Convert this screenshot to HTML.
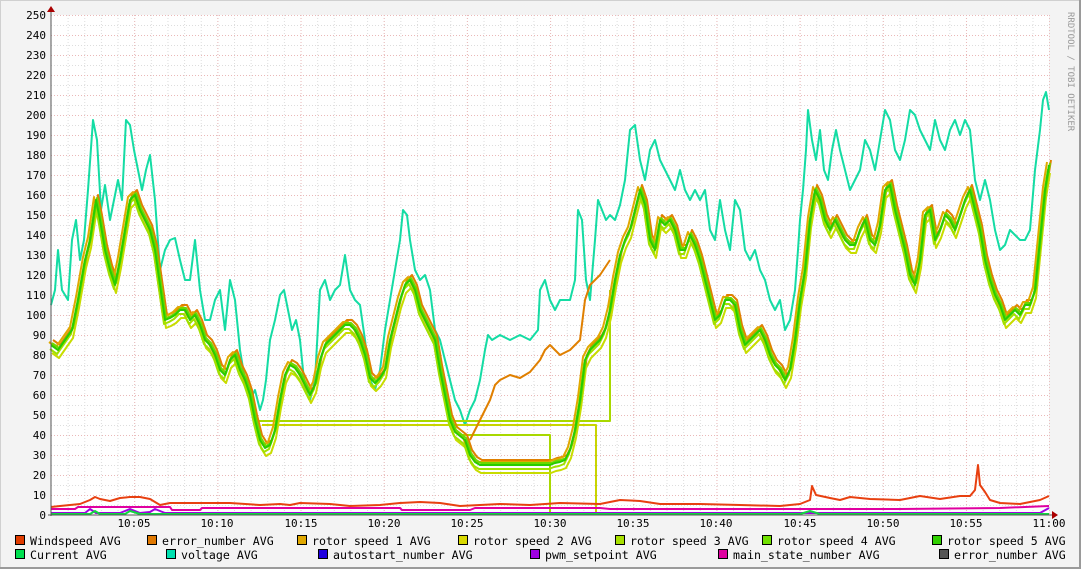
<!DOCTYPE html>
<html><head><meta charset="utf-8"><style>
html,body{margin:0;padding:0;background:#f3f3f3}
svg{display:block}
text{font-family:"DejaVu Sans Mono","Liberation Mono",monospace;font-size:11px;fill:#000}
.lg text{font-size:11.6px}
</style></head><body>
<svg width="1081" height="569" xmlns="http://www.w3.org/2000/svg">
<defs>
<pattern id="vg" x="51" y="0" width="16.636" height="569" patternUnits="userSpaceOnUse"><line x1="0.5" y1="0" x2="0.5" y2="569" stroke="#ddd" stroke-dasharray="1,2"/></pattern>
<pattern id="vr" x="51" y="0" width="83.18" height="569" patternUnits="userSpaceOnUse"><line x1="0.5" y1="0" x2="0.5" y2="569" stroke="#eab8b8" stroke-dasharray="1,2"/></pattern>
<pattern id="hg" x="0" y="15" width="1081" height="10" patternUnits="userSpaceOnUse"><line x1="0" y1="0.5" x2="1081" y2="0.5" stroke="#ddd" stroke-dasharray="1,2"/></pattern>
<pattern id="hr" x="0" y="15" width="1081" height="20" patternUnits="userSpaceOnUse"><line x1="0" y1="0.5" x2="1081" y2="0.5" stroke="#eab8b8" stroke-dasharray="1,2"/></pattern>
<polyline id="gr" points="51,345 58,350 65,340 72,330 78,300 85,260 90,240 96,200 100,220 105,250 110,270 115,285 120,260 125,230 130,200 135,195 140,210 145,220 150,230 155,250 160,285 165,320 170,318 175,315 180,310 185,310 190,320 195,315 200,325 205,340 210,345 215,355 220,370 225,375 230,360 235,355 240,370 245,380 250,395 255,420 260,440 265,448 270,445 275,430 280,400 285,375 290,365 295,368 300,375 305,385 310,395 315,385 320,360 325,345 330,340 335,335 340,330 345,325 350,325 355,330 360,340 365,355 370,378 375,383 380,378 385,370 390,340 395,320 400,300 405,285 410,280 415,290 420,310 425,320 430,330 435,340 440,370 445,395 450,420 455,432 460,436 465,440 470,455 475,462 480,465 550,465 555,463 560,462 565,460 570,450 575,430 580,400 585,360 590,350 595,345 600,340 605,330 610,310 615,280 620,255 625,240 630,230 635,210 640,190 645,205 650,240 655,250 660,220 665,225 670,220 675,230 680,250 685,250 690,235 695,245 700,260 705,280 710,300 715,320 720,315 725,300 730,300 735,305 740,330 745,345 750,340 755,335 760,330 765,340 770,355 775,365 780,370 785,380 790,370 795,340 800,300 805,270 810,220 815,190 820,200 825,220 830,230 835,220 840,230 845,240 850,245 855,245 860,230 865,220 870,240 875,245 880,225 885,190 890,185 895,210 900,230 905,250 910,275 915,285 920,260 925,215 930,210 935,240 940,230 945,215 950,220 955,230 960,215 965,200 970,190 975,210 980,230 985,260 990,280 995,295 1000,305 1005,320 1010,315 1015,310 1020,315 1025,305 1030,305 1035,290 1040,240 1045,190 1049,165" fill="none" stroke-width="2" stroke-linejoin="round"/>
</defs>
<rect x="0" y="0" width="1081" height="569" fill="#f3f3f3"/>
<rect x="0.5" y="0.5" width="1079" height="567" fill="none" stroke="#d0d0d0"/>
<line x1="1080" y1="0" x2="1080" y2="569" stroke="#9a9a9a" stroke-width="2"/>
<line x1="0" y1="568" x2="1081" y2="568" stroke="#9a9a9a" stroke-width="2"/>
<rect x="51" y="15" width="998" height="500" fill="#fff"/>
<rect x="52" y="15" width="998" height="500" fill="url(#vg)"/>
<rect x="51" y="15" width="998" height="500" fill="url(#hg)"/>
<rect x="52" y="15" width="998" height="500" fill="url(#vr)"/>
<rect x="51" y="15" width="998" height="500" fill="url(#hr)"/>
<g fill="none" stroke-width="2" stroke-linejoin="round">
<polyline stroke="#14dca4" points="51,305 55,290 58,250 62,290 68,300 72,240 76,220 80,260 84,240 88,190 93,120 97,140 101,210 105,185 110,220 118,180 122,200 126,120 130,125 134,150 138,170 142,190 146,170 150,155 155,200 160,270 165,250 170,240 175,238 180,260 185,280 190,280 195,240 200,290 205,320 210,320 215,300 220,290 225,330 230,280 235,300 240,350 245,380 250,400 255,390 260,410 263,400 266,380 270,340 275,320 280,295 284,290 288,310 292,330 296,320 300,340 305,390 310,400 315,380 320,290 325,280 330,300 335,290 340,285 345,255 350,290 355,300 360,305 365,340 370,380 375,390 380,370 385,330 390,300 395,270 400,240 403,210 407,215 410,240 415,270 420,280 425,275 430,290 435,330 440,340 445,360 450,380 455,400 460,410 465,425 470,410 475,400 480,380 485,350 488,335 492,340 500,335 510,340 520,335 530,340 538,330 540,290 545,280 550,300 555,310 560,300 565,300 570,300 575,280 578,210 582,220 586,280 590,300 595,240 598,200 602,210 606,220 610,215 615,220 620,205 625,180 630,130 635,125 640,160 645,180 650,150 655,140 660,160 665,170 670,180 675,190 680,170 685,190 690,200 695,190 700,200 705,190 710,230 715,240 720,200 725,230 730,250 735,200 740,210 745,250 750,260 755,250 760,270 765,280 770,300 775,310 780,300 785,330 790,320 795,290 798,250 800,220 803,190 806,150 808,110 812,140 816,160 820,130 824,170 828,180 832,150 836,130 840,150 845,170 850,190 855,180 860,170 865,140 870,150 875,170 880,140 885,110 890,120 895,150 900,160 905,140 910,110 915,115 920,130 925,140 930,150 935,120 940,140 945,150 950,130 955,120 960,135 965,120 970,130 975,180 980,200 985,180 990,200 995,230 1000,250 1005,245 1010,230 1015,235 1020,240 1025,240 1030,230 1035,170 1040,130 1043,100 1046,92 1049,110"/>
<polyline points="255,421 610,421 610,290" stroke="#a8d800"/>
<polyline points="262,425 596,425 596,515" stroke="#c8d400"/>
<polyline points="462,435 550,435 550,515" stroke="#a8d800"/>
<polyline points="470,440 480,420 490,400 495,385 500,380 510,375 520,378 530,372 540,360 545,350 550,345 555,350 560,355 570,350 575,345 580,340 585,300 590,285 600,275 610,260" stroke="#e08000"/>
</g>
<use href="#gr" stroke="#e08000" transform="translate(2,-5)"/>
<use href="#gr" stroke="#e0a800" transform="translate(-2,-3)"/>
<use href="#gr" stroke="#c8dc00" transform="translate(1,8)"/>
<use href="#gr" stroke="#a0e000" transform="translate(-1,4)"/>
<use href="#gr" stroke="#6cd800" transform="translate(1,-2)"/>
<use href="#gr" stroke="#28cc00"/>
<g fill="none" stroke-width="2" stroke-linejoin="round">
<polyline points="51,513 85,513 90,509 96,513 120,513 130,509 140,513 150,512 155,509 165,513 1040,513 1049,508" stroke="#a000e0"/>
<polyline points="51,514 90,514 95,511 100,514 125,514 130,511 140,514 800,514 810,511 820,514 1049,514" stroke="#10d840"/>
<polyline points="51,509 75,509 78,507 170,507 172,510 200,510 202,508 400,508 402,510 470,510 475,508 600,508 610,509 800,509 900,509 1000,508 1049,506" stroke="#e000a0"/>
<polyline points="51,507 60,506 70,505 80,504 90,500 95,497 100,499 110,501 120,498 130,497 140,497 150,499 155,502 160,505 170,503 200,503 230,503 260,505 280,504 290,505 300,503 330,504 350,506 380,505 400,503 420,502 440,503 460,506 500,504 530,505 560,503 600,504 620,500 640,501 660,504 700,504 740,505 780,506 800,504 810,500 812,486 816,495 830,498 840,500 850,497 870,499 900,500 920,496 940,499 960,496 970,496 975,490 978,465 980,485 985,492 990,500 1000,503 1020,504 1040,500 1049,496" stroke="#e84010"/>
</g>
<line x1="51" y1="10" x2="51" y2="516" stroke="#555"/>
<line x1="48" y1="515" x2="1054" y2="515" stroke="#555"/>
<polygon points="47,12 55,12 51,6" fill="#a00"/>
<polygon points="1052,511 1052,519 1058,515" fill="#a00"/>
<g text-anchor="end">
<text x="46" y="19">250</text><text x="46" y="39">240</text><text x="46" y="59">230</text><text x="46" y="79">220</text><text x="46" y="99">210</text><text x="46" y="119">200</text><text x="46" y="139">190</text><text x="46" y="159">180</text><text x="46" y="179">170</text><text x="46" y="199">160</text><text x="46" y="219">150</text><text x="46" y="239">140</text><text x="46" y="259">130</text><text x="46" y="279">120</text><text x="46" y="299">110</text><text x="46" y="319">100</text><text x="46" y="339">90</text><text x="46" y="359">80</text><text x="46" y="379">70</text><text x="46" y="399">60</text><text x="46" y="419">50</text><text x="46" y="439">40</text><text x="46" y="459">30</text><text x="46" y="479">20</text><text x="46" y="499">10</text><text x="46" y="519">0</text>
</g>
<g text-anchor="middle">
<text x="134" y="527">10:05</text><text x="217" y="527">10:10</text><text x="301" y="527">10:15</text><text x="384" y="527">10:20</text><text x="467" y="527">10:25</text><text x="550" y="527">10:30</text><text x="633" y="527">10:35</text><text x="716" y="527">10:40</text><text x="800" y="527">10:45</text><text x="883" y="527">10:50</text><text x="966" y="527">10:55</text><text x="1049" y="527">11:00</text>
</g>
<text x="1068" y="12" transform="rotate(90 1068 12)" style="font-size:9px;fill:#999">RRDTOOL / TOBI OETIKER</text>
<g stroke="#000">
<rect x="15.5" y="535.5" width="9" height="9" fill="#e03c00"/>
<rect x="147.5" y="535.5" width="9" height="9" fill="#e07800"/>
<rect x="297.5" y="535.5" width="9" height="9" fill="#e0a800"/>
<rect x="458.5" y="535.5" width="9" height="9" fill="#d8d800"/>
<rect x="615.5" y="535.5" width="9" height="9" fill="#a8e000"/>
<rect x="762.5" y="535.5" width="9" height="9" fill="#70e000"/>
<rect x="932.5" y="535.5" width="9" height="9" fill="#30d000"/>
<rect x="15.5" y="549.5" width="9" height="9" fill="#00e050"/>
<rect x="166.5" y="549.5" width="9" height="9" fill="#00e0b0"/>
<rect x="318.5" y="549.5" width="9" height="9" fill="#2000e0"/>
<rect x="530.5" y="549.5" width="9" height="9" fill="#a000e0"/>
<rect x="718.5" y="549.5" width="9" height="9" fill="#e000a0"/>
<rect x="939.5" y="549.5" width="9" height="9" fill="#555555"/>
</g>
<g class="lg">
<text x="30" y="545">Windspeed AVG</text>
<text x="162" y="545">error_number AVG</text>
<text x="312" y="545">rotor speed 1 AVG</text>
<text x="473" y="545">rotor speed 2 AVG</text>
<text x="630" y="545">rotor speed 3 AVG</text>
<text x="777" y="545">rotor speed 4 AVG</text>
<text x="947" y="545">rotor speed 5 AVG</text>
<text x="30" y="559">Current AVG</text>
<text x="181" y="559">voltage AVG</text>
<text x="333" y="559">autostart_number AVG</text>
<text x="545" y="559">pwm_setpoint AVG</text>
<text x="733" y="559">main_state_number AVG</text>
<text x="954" y="559">error_number AVG</text>
</g>
</svg>
</body></html>
